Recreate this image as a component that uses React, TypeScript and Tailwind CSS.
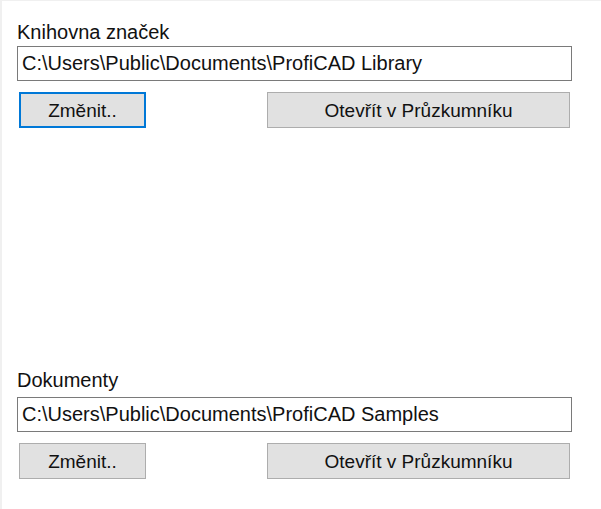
import React from 'react'

interface FolderFieldProps {
  label: string
  path: string
  focused?: boolean
  className?: string
  inputClass?: string
}

function FolderField({ label, path, focused, className = '', inputClass = 'mt-[2px]' }: FolderFieldProps) {
  return (
    <div className={className}>
      <div className="h-[23px] leading-[23px]">{label}</div>
      <div className={`${inputClass} flex h-[35px] w-[555px] items-center border border-[#7a7a7a] bg-white px-[4px] leading-[23px]`}>
        {path}
      </div>
      <div className="ml-[2px] mt-[11px] flex w-[551px] justify-between text-[19px]">
        <button
          className={`h-[36px] w-[127px] bg-[#e1e1e1] leading-[23px] ${
            focused ? 'border-2 border-[#0078d7]' : 'border border-[#adadad]'
          }`}
        >
          Změnit..
        </button>
        <button className="h-[36px] w-[303px] border border-[#adadad] bg-[#e1e1e1] leading-[23px]">
          Otevřít v Průzkumníku
        </button>
      </div>
    </div>
  )
}

export default function App() {
  return (
    <div className="h-[509px] w-[601px] border-l-2 border-t border-[#f0f0f0] bg-white pl-[15px] pt-[20px] font-['Liberation_Sans',Arial,sans-serif] text-[20px] text-[#111]">
      <FolderField
        label="Knihovna značek"
        path="C:\Users\Public\Documents\ProfiCAD Library"
        focused
      />
      <FolderField
        className="mt-[241px]"
        inputClass="mt-[5px]"
        label="Dokumenty"
        path="C:\Users\Public\Documents\ProfiCAD Samples"
      />
    </div>
  )
}
